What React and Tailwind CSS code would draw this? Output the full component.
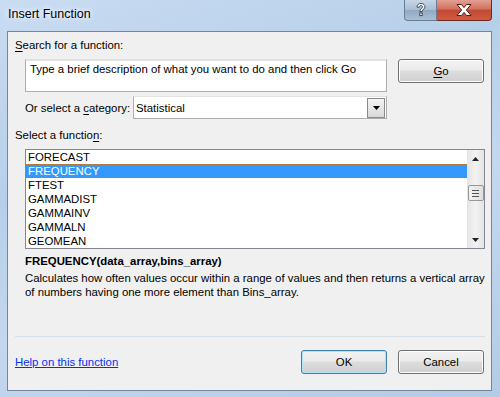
import React from "react";

const font = { fontFamily: '"Liberation Sans", Arial, sans-serif' };

function HelpGlyph() {
  return (
    <svg width="14" height="16" viewBox="0 0 14 16">
      <path
        d="M3 5.2 C3 2.5 5 1.5 7 1.5 C9.5 1.5 11 3 11 4.8 C11 6.8 8.2 7.4 8.2 9.5 L5.8 9.5 C5.8 6.6 8.6 6.2 8.6 4.9 C8.6 4.1 8 3.6 7 3.6 C6 3.6 5.4 4.2 5.4 5.2 Z"
        fill="#ffffff"
        stroke="#3b4a5c"
        strokeWidth="1"
      />
      <rect x="5.8" y="11" width="2.4" height="2.6" fill="#ffffff" stroke="#3b4a5c" strokeWidth="1" />
    </svg>
  );
}

function CloseGlyph() {
  return (
    <svg width="18" height="14" viewBox="0 0 18 14">
      <path
        d="M2 1.5 L6.5 1.5 L9 4.6 L11.5 1.5 L16 1.5 L11.4 7 L16 12.5 L11.5 12.5 L9 9.4 L6.5 12.5 L2 12.5 L6.6 7 Z"
        fill="#ffffff"
        stroke="#5a1a14"
        strokeWidth="1"
        strokeLinejoin="round"
      />
    </svg>
  );
}

function Button({ children, primary, className = "" }) {
  return (
    <div
      className={
        "flex items-center justify-center rounded-[3px] border text-black " +
        (primary
          ? "border-[#3c7fb1] shadow-[inset_0_0_0_1px_#aee3f9] "
          : "border-[#707070] shadow-[inset_0_0_0_1px_#fcfcfc] ") +
        "bg-[linear-gradient(to_bottom,#f2f2f2_0%,#ebebeb_45%,#dddddd_50%,#cfcfcf_100%)] " +
        className
      }
    >
      {children}
    </div>
  );
}

const items = ["FORECAST", "FREQUENCY", "FTEST", "GAMMADIST", "GAMMAINV", "GAMMALN", "GEOMEAN"];

export default function App() {
  return (
    <div
      className="relative flex h-[397px] w-[500px] flex-col overflow-hidden bg-[linear-gradient(160deg,#c9dcf2_0%,#b6cfe9_35%,#c3d8ef_60%,#b3cbe6_100%)]"
      style={font}
    >
      {/* title bar */}
      <div className="flex h-[31px] shrink-0 items-center pl-[8px] pb-[2px]">
        <span className="text-[12.5px] text-black [text-shadow:0_0_8px_#ffffff,0_0_4px_#ffffff]">Insert Function</span>
      </div>
      {/* caption buttons */}
      <div className="absolute left-[404px] top-0 flex h-[21px]">
        <div className="flex h-[21px] w-[33px] items-center justify-center rounded-bl-[4px] border border-t-0 border-[#6a7d92] bg-[linear-gradient(to_bottom,#c6d6e6_0%,#aabdd2_50%,#93a9c2_52%,#a9bfd6_100%)]">
          <HelpGlyph />
        </div>
        <div className="flex h-[21px] w-[55px] items-center justify-center rounded-br-[4px] border border-l-0 border-t-0 border-[#6a2a22] bg-[linear-gradient(to_bottom,#e3a093_0%,#d1705e_45%,#c04a34_52%,#d45a3e_100%)]">
          <CloseGlyph />
        </div>
      </div>

      {/* client area */}
      <div className="ml-[7px] flex h-[360px] w-[485px] flex-col border border-[#75869a] bg-[#f0f0f0] text-[11.4px] leading-[14px] text-black">
        <div className="mt-[6px] pl-[7px]">
          <span className="underline decoration-1 underline-offset-2">S</span>earch for a function:
        </div>

        <div className="mt-[7px] flex items-start">
          <div className="ml-[17px] h-[33px] w-[362px] border border-[#abadb3] border-t-[#e3e3e3] bg-white pl-[4px] pt-[2px] shadow-[inset_0_1px_0_#e3e3e3]">
            Type a brief description of what you want to do and then click Go
          </div>
          <Button className="ml-[11px] h-[24px] w-[86px]">
            <span className="underline decoration-1 underline-offset-2">G</span>o
          </Button>
        </div>

        <div className="mt-[4px] flex items-center">
          <div className="ml-[17px] w-[108px]">
            Or select a <span className="underline decoration-1 underline-offset-2">c</span>ategory:
          </div>
          <div className="flex h-[23px] w-[254px] items-center border border-[#abadb3] border-t-[#e3e3e3] bg-white">
            <span className="flex-1 pl-[2px]">Statistical</span>
            <div className="mr-[1px] flex h-[20px] w-[18px] items-center justify-center border border-[#8a8a8a] bg-[linear-gradient(to_bottom,#f4f4f4,#d9d9d9)]">
              <svg width="7" height="4" viewBox="0 0 7 4">
                <path d="M0 0 L7 0 L3.5 4 Z" fill="#000" />
              </svg>
            </div>
          </div>
        </div>

        <div className="mt-[9px] pl-[7px]">
          Select a functio<span className="underline decoration-1 underline-offset-2">n</span>:
        </div>

        <div className="ml-[17px] mt-[7px] flex h-[100px] w-[460px] border border-[#828790] bg-white">
          <div className="flex flex-1 flex-col overflow-hidden">
            {items.map((it, i) => (
              <div
                key={it}
                className={
                  "h-[14px] shrink-0 pl-[2px] " +
                  (i === 1 ? "bg-[#3399ff] text-white outline outline-1 -outline-offset-1 outline-dotted outline-[#b07a3a]" : "")
                }
              >
                {it}
              </div>
            ))}
          </div>
          <div className="flex w-[17px] flex-col items-center bg-[linear-gradient(to_right,#e4e4e4,#f2f2f2,#e4e4e4)]">
            <div className="flex h-[17px] w-full items-center justify-center">
              <svg width="7" height="4" viewBox="0 0 7 4">
                <path d="M3.5 0 L7 4 L0 4 Z" fill="#222" />
              </svg>
            </div>
            <div className="mt-[18px] flex h-[16px] w-[16px] flex-col items-center justify-center gap-[2px] rounded-[2px] border border-[#979797] bg-[linear-gradient(to_right,#f2f2f2,#e0e0e0)]">
              <div className="h-px w-[7px] bg-[#555]" />
              <div className="h-px w-[7px] bg-[#555]" />
              <div className="h-px w-[7px] bg-[#555]" />
            </div>
            <div className="flex-1" />
            <div className="flex h-[17px] w-full items-center justify-center">
              <svg width="7" height="4" viewBox="0 0 7 4">
                <path d="M0 0 L7 0 L3.5 4 Z" fill="#222" />
              </svg>
            </div>
          </div>
        </div>

        <div className="ml-[17px] mt-[5px] font-bold">FREQUENCY(data_array,bins_array)</div>
        <div className="ml-[17px] mt-[3px] w-[462px]">
          Calculates how often values occur within a range of values and then returns a vertical array of numbers having one more element than Bins_array.
        </div>

        <div className="ml-[7px] mt-[37px] h-px w-[470px] bg-[#d5dfe5]" />

        <div className="mt-[13px] flex items-center">
          <span className="ml-[7px] flex-1 text-[#0033ee] underline decoration-1 underline-offset-1">Help on this function</span>
          <Button primary className="h-[24px] w-[86px]">OK</Button>
          <Button className="ml-[11px] mr-[7px] h-[24px] w-[86px]">Cancel</Button>
        </div>
      </div>
    </div>
  );
}
